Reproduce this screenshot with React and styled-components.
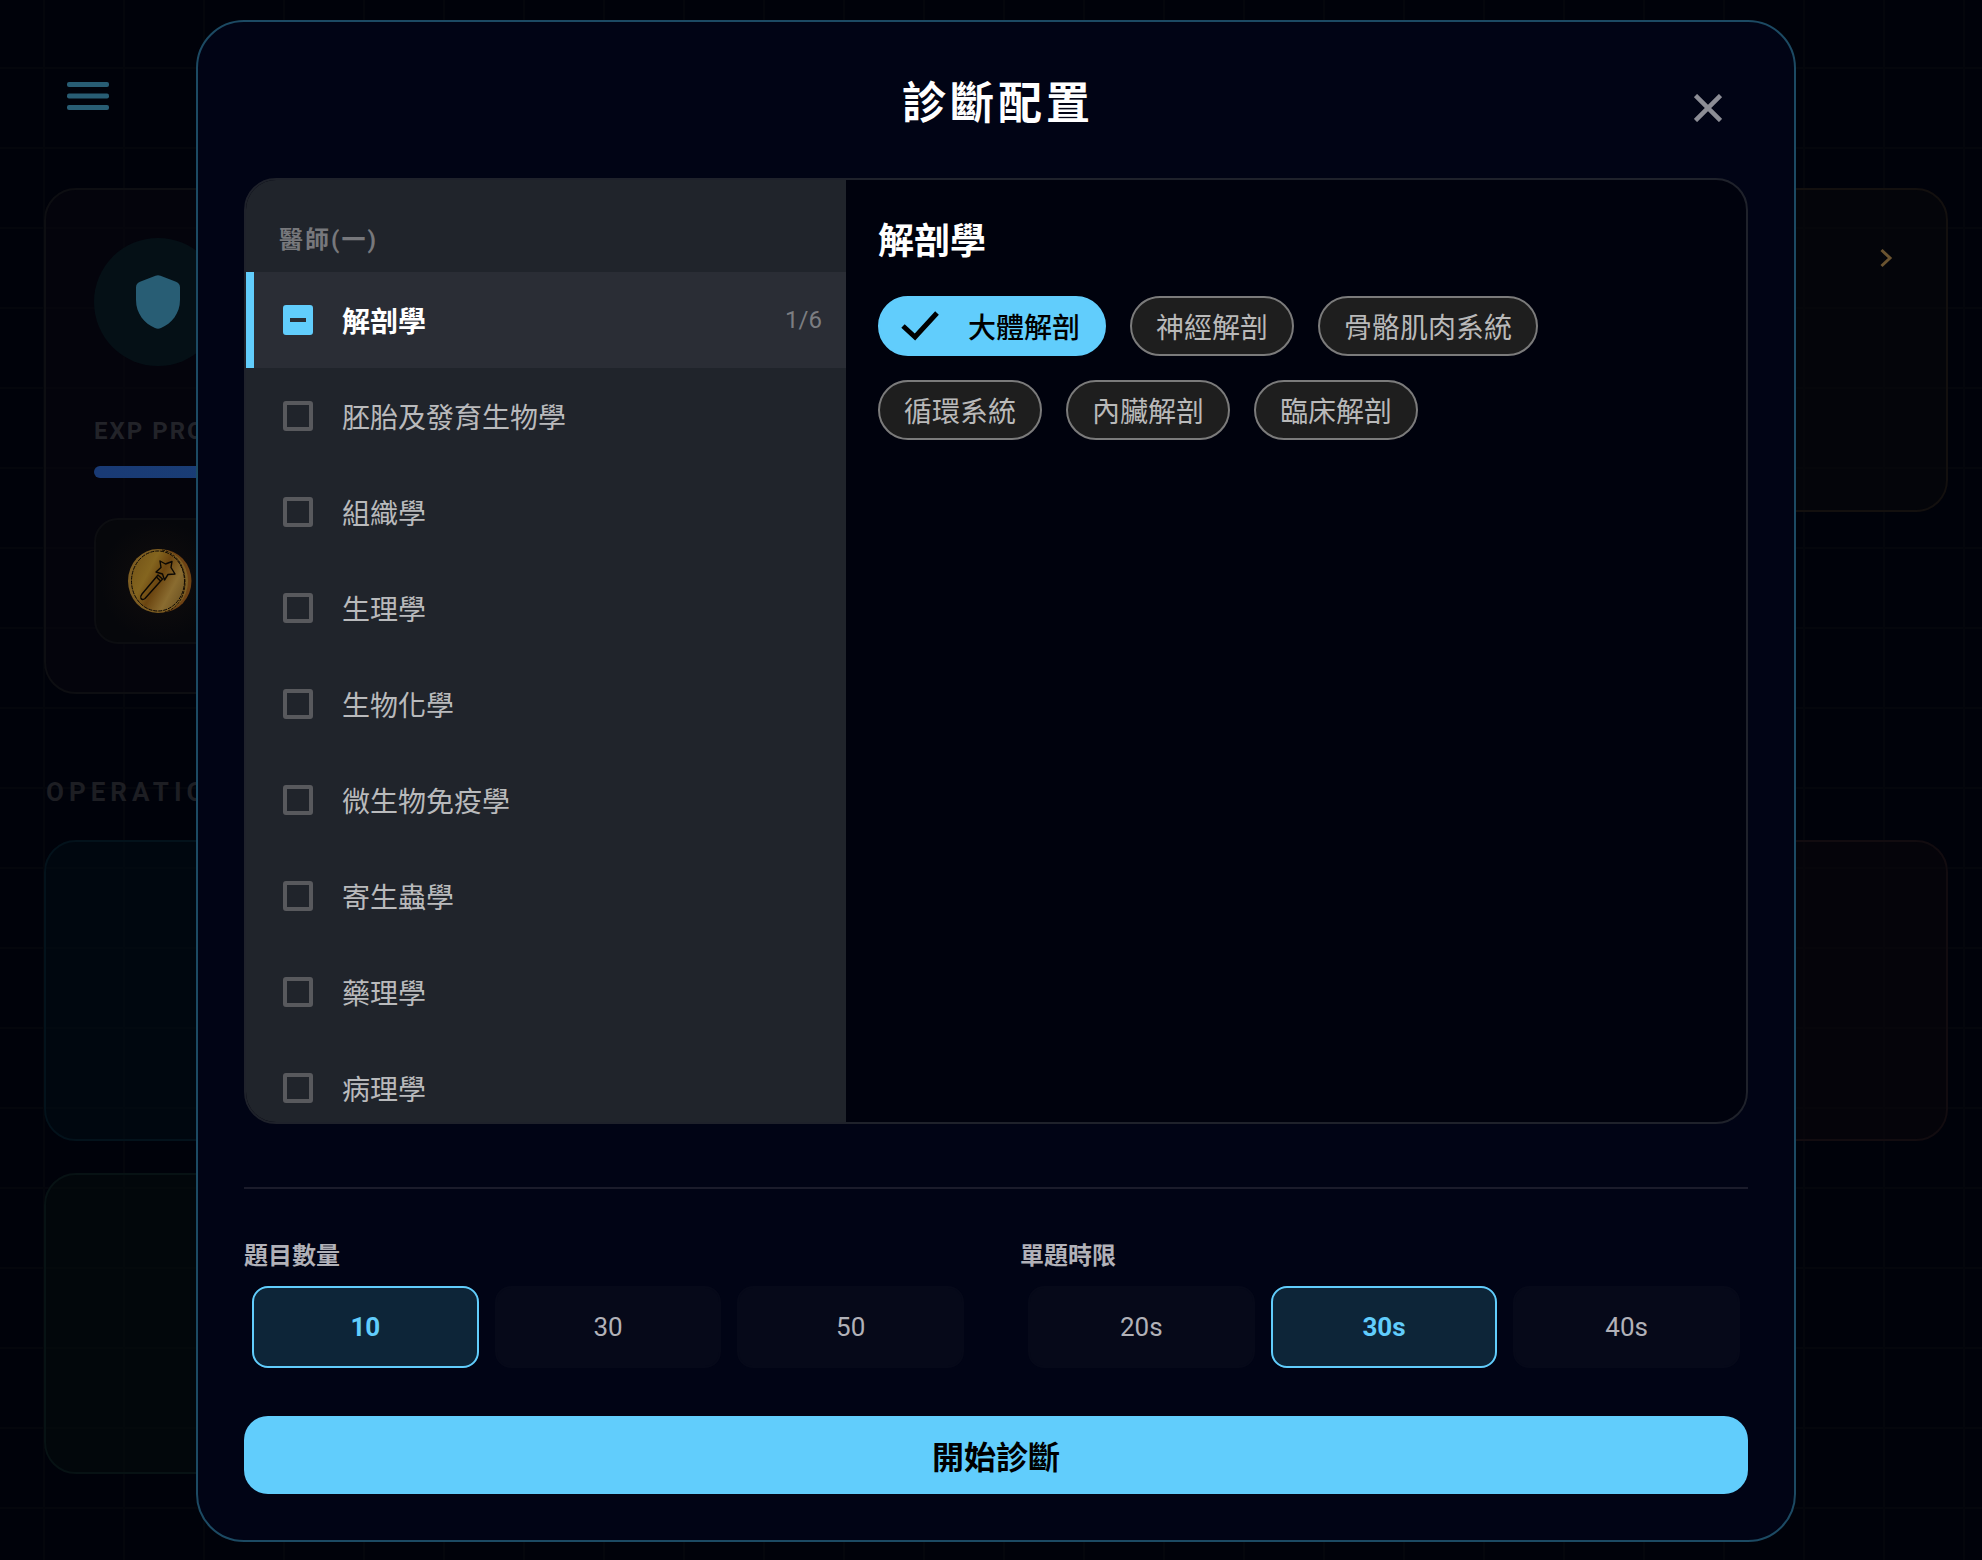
import React, { useState } from "react";
import styled, { createGlobalStyle, css } from "styled-components";

const cjk = `"Noto Sans CJK TC", Roboto, sans-serif`;

const GlobalStyle = createGlobalStyle`
  *, *::before, *::after { box-sizing: border-box; }
  html, body { margin: 0; background: #00020a; }
  body {
    font-family: Roboto, "Noto Sans CJK TC", sans-serif;
    color: #fff;
    overflow: hidden;
  }
  button, input { font: inherit; margin: 0; }
  button { cursor: pointer; }
  h1, h2, h3, p { margin: 0; }
`;

const Page = styled.div`
  min-height: 100vh;
  padding: 56px 34px 40px 44px;
  background-color: #00020a;
  background-image:
    linear-gradient(to right, #04060c 2px, transparent 2px),
    linear-gradient(to bottom, #04060c 2px, transparent 2px);
  background-size: 80px 80px;
  background-position: 43px 67px;
`;

const TopBar = styled.header`
  display: flex;
  align-items: center;
  height: 80px;
  padding-left: 22px;
`;

const MenuButton = styled.button`
  display: grid;
  place-items: center;
  width: 44px;
  height: 44px;
  padding: 0;
  border: 0;
  background: none;
`;

const Overview = styled.section`
  display: grid;
  grid-template-columns: 1fr 1fr;
  gap: 32px;
  align-items: start;
  margin-top: 52px;
`;

const tones = {
  neutral: ["rgba(8, 7, 15, 0.45)", "#0d0e12"],
  gold: ["rgba(11, 11, 11, 0.4)", "#13100f"],
  cyan: ["rgba(0, 12, 20, 0.5)", "#03121b"],
  red: ["rgba(13, 7, 11, 0.4)", "#120c10"],
  green: ["rgba(4, 12, 12, 0.5)", "#071214"],
};

const Card = styled.article`
  height: ${(p) => p.$height}px;
  padding: 48px;
  border: 2px solid ${(p) => tones[p.$tone][1]};
  border-radius: 32px;
  background: ${(p) => tones[p.$tone][0]};
`;

const CardEnd = styled.div`
  display: flex;
  justify-content: flex-end;
`;

const Avatar = styled.div`
  display: grid;
  place-items: center;
  width: 128px;
  height: 128px;
  border-radius: 50%;
  background: rgba(5, 21, 27, 0.7);
`;

const ExpLabel = styled.p`
  margin-top: 48px;
  font-size: 24px;
  line-height: 34px;
  font-weight: 700;
  letter-spacing: 2px;
  color: #222329;
`;

const ExpTrack = styled.div`
  height: 12px;
  margin-top: 18px;
  border-radius: 6px;
  background: linear-gradient(to right, #193a75, #1c4d72);
`;

const CoinBox = styled.div`
  display: flex;
  align-items: center;
  height: 126px;
  margin-top: 40px;
  padding-left: 32px;
  border: 2px solid #0c0d11;
  border-radius: 24px;
  background: radial-gradient(circle at 64px 61px, #0d0b0c 24px, #06070b 60px);
`;

const SectionTitle = styled.h2`
  margin-top: 81px;
  padding-left: 2px;
  font-size: 26px;
  line-height: 34px;
  font-weight: 700;
  letter-spacing: 5px;
  color: #1d1e23;
`;

const Operations = styled.section`
  display: grid;
  grid-template-columns: 1fr 1fr;
  gap: 32px;
  margin-top: 31px;
`;

const Overlay = styled.div`
  position: fixed;
  inset: 0;
  display: flex;
  justify-content: center;
  padding: 20px 0 18px 10px;
`;

const Modal = styled.div`
  display: flex;
  flex-direction: column;
  width: 100%;
  max-width: 1600px;
  padding: 46px;
  border: 2px solid #1c4a63;
  border-radius: 48px;
  background: #010415;
`;

const ModalHeader = styled.header`
  display: grid;
  grid-template-columns: 80px 1fr 80px;
  height: 80px;
  margin-bottom: 30px;
`;

const ModalTitle = styled.h1`
  grid-column: 2;
  font-family: ${cjk};
  font-size: 44px;
  line-height: 64px;
  font-weight: 700;
  letter-spacing: 4px;
  text-indent: 4px;
  text-align: center;
`;

const CloseButton = styled.button`
  display: grid;
  place-items: center;
  padding: 0;
  border: 0;
  background: none;
`;

const Picker = styled.div`
  display: grid;
  grid-template-columns: 2fr 3fr;
  flex: 1;
  min-height: 0;
  border: 2px solid #1f222b;
  border-radius: 32px;
  background: #00020d;
  overflow: hidden;
`;

const Sidebar = styled.div`
  min-height: 0;
  overflow: hidden;
  background: #20242b;
`;

const GroupLabel = styled.h3`
  padding: 44px 33px 16px;
  font-size: 24px;
  line-height: 32px;
  font-weight: 700;
  letter-spacing: 2px;
  color: #77787c;
`;

const SubjectRow = styled.label`
  display: flex;
  align-items: center;
  height: 96px;
  padding: 0 24px 0 29px;
  border-left: 8px solid transparent;
  font-family: ${cjk};
  font-size: 28px;
  line-height: 40px;
  color: #b9babc;
  ${(p) =>
    p.$active &&
    css`
      border-left-color: #61cdfc;
      background: #2a2d35;
      color: #fff;
      font-weight: 700;
    `}
`;

const SubjectBox = styled.input.attrs({ type: "checkbox" })`
  appearance: none;
  flex: none;
  display: grid;
  place-items: center;
  width: 30px;
  height: 30px;
  margin-right: 29px;
  border: 4px solid #58595d;
  border-radius: 3px;
  ${(p) =>
    p.$partial &&
    css`
      border-color: #61cdfc;
      background: #61cdfc;
      &::before {
        content: "";
        width: 16px;
        height: 4px;
        background: #2a2d35;
      }
    `}
`;

const SubjectName = styled.span`
  flex: 1;
`;

const SubjectCount = styled.span`
  font-family: Roboto, sans-serif;
  font-size: 24px;
  line-height: 32px;
  font-weight: 400;
  color: #7c7d81;
`;

const Topics = styled.div`
  padding: 32px;
`;

const TopicsTitle = styled.h2`
  font-family: ${cjk};
  font-size: 36px;
  line-height: 52px;
  font-weight: 700;
`;

const ChipList = styled.div`
  display: flex;
  flex-wrap: wrap;
  gap: 24px;
  margin-top: 32px;
`;

const Chip = styled.button`
  display: flex;
  align-items: center;
  gap: 28px;
  height: 60px;
  padding: 0 24px;
  border: 2px solid #7b7b7b;
  border-radius: 30px;
  background: #1e1e1e;
  font-family: ${cjk};
  font-size: 28px;
  line-height: 40px;
  color: #b9b9b9;
  ${(p) =>
    p.$selected &&
    css`
      padding-left: 20px;
      border-color: #61cdfc;
      background: #61cdfc;
      color: #000;
      font-weight: 500;
    `}
`;

const Settings = styled.div`
  display: grid;
  grid-template-columns: 1fr 1fr;
  gap: 48px;
  margin-top: 63px;
  padding-top: 48px;
  border-top: 2px solid #1b1c2b;
`;

const Field = styled.fieldset`
  min-width: 0;
  margin: 0;
  padding: 0;
  border: 0;
`;

const FieldLabel = styled.legend`
  padding: 0;
  font-family: ${cjk};
  font-size: 24px;
  line-height: 34px;
  font-weight: 700;
  color: #b1b1b8;
`;

const Options = styled.div`
  display: flex;
  gap: 16px;
  padding: 15px 8px 0;
`;

const Option = styled.button`
  flex: 1;
  height: 82px;
  padding: 0;
  border: 2px solid #060919;
  border-radius: 16px;
  background: #060919;
  font-size: 26px;
  line-height: 36px;
  color: #b1b1b8;
  ${(p) =>
    p.$selected &&
    css`
      border-color: #61cdfc;
      background: #0d2538;
      color: #61cdfc;
      font-weight: 700;
    `}
`;

const StartButton = styled.button`
  height: 78px;
  margin-top: 48px;
  padding: 0;
  border: 0;
  border-radius: 24px;
  background: #61cdfc;
  font-family: ${cjk};
  font-size: 32px;
  line-height: 46px;
  font-weight: 700;
  color: #000;
`;

const MenuIcon = () => (
  <svg width="42" height="28" viewBox="0 0 42 28" fill="#285d74" aria-hidden="true">
    <rect width="42" height="5" rx="2" />
    <rect y="11.5" width="42" height="5" rx="2" />
    <rect y="23" width="42" height="5" rx="2" />
  </svg>
);

const ShieldIcon = () => (
  <svg width="44" height="54" viewBox="0 0 44 54" fill="#285d74" aria-hidden="true">
    <path d="M19.5.8Q22-.4 24.500.8L40 6.800Q44 8.500 44 12.500V25C44 38.500 35.500 48.500 25 53Q22 54.300 19 53C8.500 48.500 0 38.500 0 25V12.500Q0 8.500 4 6.800Z" />
  </svg>
);

const CoinIcon = () => (
  <svg width="64" height="64" viewBox="0 0 64 64" aria-hidden="true">
    <defs>
      <linearGradient id="coinFace" x1="0" y1="0.2" x2="1" y2="0.8">
        <stop offset="0" stopColor="#755518" />
        <stop offset="0.3" stopColor="#84651f" />
        <stop offset="0.5" stopColor="#6b4510" />
        <stop offset="0.75" stopColor="#8a6c30" />
        <stop offset="1" stopColor="#6c5222" />
      </linearGradient>
    </defs>
    <ellipse cx="34" cy="32" rx="29.500" ry="31.500" fill="#6e4214" />
    <ellipse cx="30" cy="32" rx="30" ry="32" fill="#7d5d22" />
    <ellipse cx="30" cy="32" rx="26.500" ry="30" fill="url(#coinFace)" stroke="#0b0804" strokeWidth="1" strokeDasharray="4 1" />
    <path d="M34 1C47 3 57 16 57 33C57 48 49 60 37 63" fill="none" stroke="#1a1005" strokeWidth="1" strokeDasharray="3 1" />
    <g fill="none" stroke="#0b0804" strokeWidth="1.400" strokeLinejoin="round">
      <path d="M32 12L37.500 15L44 12.500L43 18.500L47 25L40 25.500L36.500 31L34.500 25L28 23L33 18.500Z" />
      <path d="M30 26L34.500 30L17 49.500Q14.500 51.500 13 49.500Q12 47.500 14 45Z" />
      <path d="M28.500 28L32.500 32" />
    </g>
  </svg>
);

const ChevronIcon = () => (
  <svg width="24" height="40" viewBox="0 0 24 40" fill="none" stroke="#6b5430" strokeWidth="3" aria-hidden="true">
    <path d="M7.500 12L16 20L7.500 28" />
  </svg>
);

const CloseIcon = () => (
  <svg width="28" height="28" viewBox="0 0 28 28" fill="none" stroke="#8c8d95" strokeWidth="4.500" aria-hidden="true">
    <path d="M1.500 1.500L26.500 26.500M26.500 1.500L1.500 26.500" />
  </svg>
);

const CheckIcon = () => (
  <svg width="40" height="40" viewBox="0 0 40 40" fill="none" stroke="#000" strokeWidth="5" aria-hidden="true">
    <path d="M3 20L15 31L37 7" />
  </svg>
);

const subjects = [
  "解剖學",
  "胚胎及發育生物學",
  "組織學",
  "生理學",
  "生物化學",
  "微生物免疫學",
  "寄生蟲學",
  "藥理學",
  "病理學",
];

const topics = ["大體解剖", "神經解剖", "骨骼肌肉系統", "循環系統", "內臟解剖", "臨床解剖"];

function OptionGroup({ label, options, initial }) {
  const [value, setValue] = useState(initial);
  return (
    <Field>
      <FieldLabel>{label}</FieldLabel>
      <Options>
        {options.map((option) => (
          <Option
            key={option}
            type="button"
            $selected={option === value}
            aria-pressed={option === value}
            onClick={() => setValue(option)}
          >
            {option}
          </Option>
        ))}
      </Options>
    </Field>
  );
}

export default function App() {
  const [selected, setSelected] = useState(["大體解剖"]);
  const toggle = (topic) =>
    setSelected((list) =>
      list.includes(topic) ? list.filter((item) => item !== topic) : [...list, topic]
    );

  return (
    <>
      <GlobalStyle />
      <Page>
        <TopBar>
          <MenuButton type="button" aria-label="Menu">
            <MenuIcon />
          </MenuButton>
        </TopBar>
        <Overview>
          <Card $tone="neutral" $height={506}>
            <Avatar>
              <ShieldIcon />
            </Avatar>
            <ExpLabel>EXP PROGRESS</ExpLabel>
            <ExpTrack />
            <CoinBox>
              <CoinIcon />
            </CoinBox>
          </Card>
          <Card $tone="gold" $height={324}>
            <CardEnd>
              <ChevronIcon />
            </CardEnd>
          </Card>
        </Overview>
        <SectionTitle>OPERATIONS</SectionTitle>
        <Operations>
          <Card $tone="cyan" $height={301} />
          <Card $tone="red" $height={301} />
          <Card $tone="green" $height={301} />
        </Operations>
      </Page>

      <Overlay>
        <Modal role="dialog" aria-modal="true" aria-labelledby="dialog-title">
          <ModalHeader>
            <ModalTitle id="dialog-title">診斷配置</ModalTitle>
            <CloseButton type="button" aria-label="Close">
              <CloseIcon />
            </CloseButton>
          </ModalHeader>

          <Picker>
            <Sidebar>
              <GroupLabel>醫師(一)</GroupLabel>
              {subjects.map((name, index) => (
                <SubjectRow key={name} $active={index === 0}>
                  <SubjectBox $partial={index === 0} />
                  <SubjectName>{name}</SubjectName>
                  {index === 0 && (
                    <SubjectCount>
                      {selected.length}/{topics.length}
                    </SubjectCount>
                  )}
                </SubjectRow>
              ))}
            </Sidebar>
            <Topics>
              <TopicsTitle>解剖學</TopicsTitle>
              <ChipList>
                {topics.map((topic) => {
                  const on = selected.includes(topic);
                  return (
                    <Chip key={topic} type="button" $selected={on} aria-pressed={on} onClick={() => toggle(topic)}>
                      {on && <CheckIcon />}
                      {topic}
                    </Chip>
                  );
                })}
              </ChipList>
            </Topics>
          </Picker>

          <Settings>
            <OptionGroup label="題目數量" options={["10", "30", "50"]} initial="10" />
            <OptionGroup label="單題時限" options={["20s", "30s", "40s"]} initial="30s" />
          </Settings>

          <StartButton type="button">開始診斷</StartButton>
        </Modal>
      </Overlay>
    </>
  );
}
